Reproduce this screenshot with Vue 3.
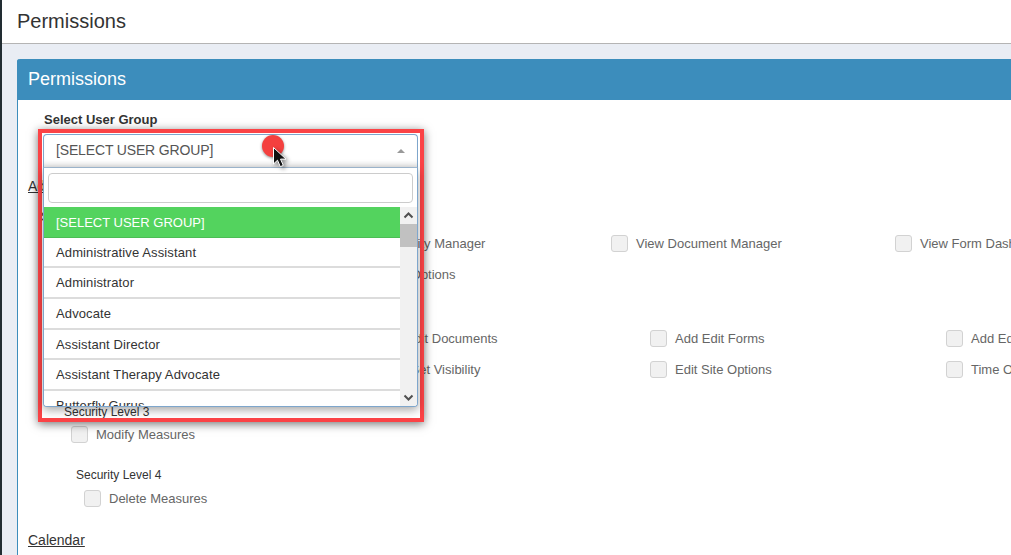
<script setup>
const options = [
  'Administrative Assistant',
  'Administrator',
  'Advocate',
  'Assistant Director',
  'Assistant Therapy Advocate',
  'Butterfly Gurus'
]
const sections = [
  {
    title: 'Security Level 1', cls: 'lvl1',
    rows: [
      ['View Dashboard', 'View Security Manager', 'View Document Manager', 'View Form Dashboard'],
      ['View Reports', 'View Test Options']
    ]
  },
  {
    title: 'Security Level 2', cls: 'lvl2',
    rows: [
      ['Add Edit Users', 'Add Edit Documents', 'Add Edit Forms', 'Add Edit Groups'],
      ['Edit Roles', 'View Set Visibility', 'Edit Site Options', 'Time Off']
    ]
  },
  { title: 'Security Level 3', cls: 'lvl3', rows: [['Modify Measures']] },
  { title: 'Security Level 4', cls: 'lvl4', rows: [['Delete Measures']] }
]
</script>

<template>
  <div class="page">
    <header class="topbar"><h1>Permissions</h1></header>
    <main class="content">
      <section class="panel">
        <div class="panel-head">Permissions</div>
        <div class="panel-body">
          <label class="group-label">Select User Group</label>
          <div class="select-slot"></div>
          <a class="cat first">Administration</a>
          <div v-for="s in sections" :key="s.title" class="level" :class="s.cls">
            <div class="level-title">{{ s.title }}</div>
            <div v-for="(row, i) in s.rows" :key="i" class="row">
              <div v-for="item in row" :key="item" class="check">
                <span class="box"></span>
                <span class="check-label">{{ item }}</span>
              </div>
            </div>
          </div>
          <a class="cat calendar">Calendar</a>
        </div>
      </section>
    </main>

    <div class="highlight">
      <div class="select">
        <span>[SELECT USER GROUP]</span>
        <i class="caret"></i>
      </div>
      <div class="drop">
        <div class="search"><input type="text" /></div>
        <div class="list">
          <div class="opts">
            <div class="opt active">[SELECT USER GROUP]</div>
            <div v-for="o in options" :key="o" class="opt">{{ o }}</div>
          </div>
          <div class="scrollbar">
            <svg class="sb-arrow up" width="17" height="17" viewBox="0 0 17 17">
              <path d="M4.5 10.5 8.5 6.5 12.5 10.5" fill="none" stroke="#505050" stroke-width="2" />
            </svg>
            <div class="thumb"></div>
            <svg class="sb-arrow down" width="17" height="17" viewBox="0 0 17 17">
              <path d="M4.5 6.5 8.5 10.5 12.5 6.5" fill="none" stroke="#505050" stroke-width="2" />
            </svg>
          </div>
        </div>
      </div>
    </div>

    <div class="dot"></div>
    <svg class="cursor" width="18" height="24" viewBox="0 0 18 24">
      <path d="M1.5 1.5V18l4-3.8 2.8 6.5 3-1.3-2.8-6.3h5.5z" fill="#111" stroke="#fff" stroke-width="1" />
    </svg>
  </div>
</template>

<style scoped>
.page {
  position: relative;
  width: 1011px;
  height: 555px;
  overflow: hidden;
  background: #e9edf4;
  border-left: 2px solid #222d32;
  box-sizing: border-box;
  font-family: "Liberation Sans", Arial, sans-serif;
}
.topbar {
  height: 44px;
  box-sizing: border-box;
  background: #fff;
  border-bottom: 1px solid #b4b4b4;
  padding-left: 15px;
  display: flex;
  align-items: center;
}
.topbar h1 {
  margin: 0 0 1px;
  font-size: 20px;
  font-weight: 400;
  color: #333;
}
.content {
  padding: 15px 0 0 15px;
}
.panel {
  width: 1100px;
  background: #fff;
  border-left: 1px solid #3c8dbc;
  border-radius: 3px 0 0 0;
}
.panel-head {
  height: 41px;
  margin-left: -1px;
  padding-left: 11px;
  background: #3c8dbc;
  border-radius: 3px 0 0 0;
  color: #fff;
  font-size: 18px;
  line-height: 40px;
}
.panel-body {
  padding: 0 0 40px 10px;
  display: flex;
  flex-direction: column;
  align-items: flex-start;
}
.group-label {
  margin: 13px 0 0 16px;
  font-size: 13px;
  line-height: 14px;
  font-weight: 700;
  color: #333;
}
.select-slot {
  height: 51px;
}
.cat {
  font-size: 14px;
  line-height: 16px;
  color: #333;
  text-decoration: underline;
}
.level {
  display: flex;
  flex-direction: column;
  align-items: flex-start;
}
.level-title {
  font-size: 12px;
  line-height: 14px;
  color: #333;
}
.row {
  display: flex;
  height: 31px;
  align-items: center;
}
.check {
  display: flex;
  align-items: center;
  gap: 8px;
  flex: none;
}
.box {
  flex: none;
  width: 15px;
  height: 15px;
  background: #f1f1f1;
  border: 1px solid #d2d2d2;
  border-radius: 3px;
}
.check-label {
  font-size: 13px;
  color: #666;
  white-space: nowrap;
}
.lvl1 { margin: 16px 0 0 13px; }
.lvl1 .level-title { margin-bottom: 4px; }
.lvl1 .check { width: 284px; }
.lvl1 .row { margin-left: 2px; }
.lvl2 { margin: 2px 0 0 13px; }
.lvl2 .level-title { margin: 0 0 17px 12px; }
.lvl2 .check { width: 296px; }
.lvl2 .row { margin-left: 17px; }
.lvl3 { margin: 20px 0 0 36px; }
.lvl3 .level-title { margin-bottom: 0; }
.lvl3 .row { margin-left: 7px; height: 31px; }
.lvl4 { margin: 18px 0 0 48px; }
.lvl4 .level-title { margin-bottom: 1px; }
.lvl4 .row { margin-left: 8px; }
.calendar { margin-top: 18px; }

.highlight {
  position: absolute;
  left: 36px;
  top: 129px;
  width: 386px;
  height: 293px;
  box-sizing: border-box;
  border: 4px solid #fb4346;
  box-shadow: 0 2px 9px rgba(0, 0, 0, 0.55);
  padding: 1px 0 0 1px;
}
.select {
  width: 375px;
  height: 34px;
  box-sizing: border-box;
  display: flex;
  align-items: center;
  justify-content: space-between;
  padding: 0 12px 2px 12px;
  background: #fff;
  border: 1px solid #7ea6cc;
  border-bottom-color: #a9c3dc;
  border-radius: 4px 4px 0 0;
  box-shadow: inset 0 -6px 6px -4px rgba(0, 0, 0, 0.14);
  font-size: 14px;
  letter-spacing: -0.15px;
  color: #555;
}
.caret {
  width: 0;
  height: 0;
  margin-top: 2px;
  border-left: 4px solid transparent;
  border-right: 4px solid transparent;
  border-bottom: 4px solid #999;
}
.drop {
  width: 375px;
  height: 239px;
  box-sizing: border-box;
  background: #fff;
  border: 1px solid #7ea6cc;
  border-top: 0;
  border-radius: 0 0 4px 4px;
  display: flex;
  flex-direction: column;
  box-shadow: 0 3px 10px rgba(0, 0, 0, 0.35);
  overflow: hidden;
}
.search {
  padding: 5px 4px 4px;
  flex: none;
}
.search input {
  display: block;
  width: 100%;
  height: 30px;
  box-sizing: border-box;
  border: 1px solid #ccc;
  border-radius: 4px;
  background: #fff;
  outline: none;
}
.list {
  flex: 1;
  min-height: 0;
  display: flex;
}
.opts {
  flex: 1;
  min-width: 0;
  overflow: hidden;
}
.opt {
  height: 30.7px;
  box-sizing: border-box;
  padding: 0 12px;
  line-height: 30px;
  font-size: 13px;
  letter-spacing: 0.12px;
  color: #333;
  background: #fff;
  border-bottom: 2px solid #dcdcdc;
}
.opt.active {
  background: #53d35e;
  color: #fff;
  font-size: 13px;
  letter-spacing: 0;
  border-bottom-color: #4bbd55;
  border-bottom-width: 1px;
  line-height: 31px;
}
.scrollbar {
  width: 17px;
  flex: none;
  background: #f1f1f1;
  position: relative;
  display: flex;
  flex-direction: column;
  justify-content: flex-start;
}
.sb-arrow { flex: none; display: block; }
.sb-arrow.down { margin-top: auto; }
.thumb {
  height: 23px;
  background: #c1c1c1;
  flex: none;
}
.dot {
  position: absolute;
  left: 260px;
  top: 135px;
  width: 22px;
  height: 22px;
  border-radius: 50%;
  background: #f4403f;
  box-shadow: 0 1px 3px rgba(0, 0, 0, 0.45);
}
.cursor {
  position: absolute;
  left: 270px;
  top: 146px;
  filter: drop-shadow(2px 2px 2px rgba(0, 0, 0, 0.45));
}
</style>
